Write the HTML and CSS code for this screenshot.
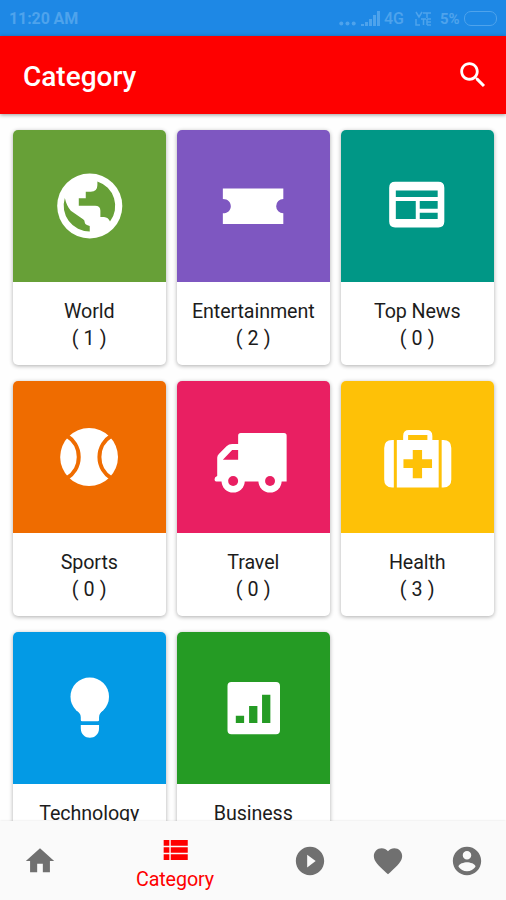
FILE: index.html
```html
<!DOCTYPE html>
<html lang="en">
<head>
    <meta charset="UTF-8">
    <meta name="viewport" content="width=device-width, initial-scale=1.0">
    <title>Category</title>
    <link rel="stylesheet" href="styles.css">
</head>
<body>
<div class="status-bar">
    <span class="time">11:20 AM</span>
    <div class="status-icons">
        <svg class="dots" viewBox="0 0 17 5"><circle cx="2.3" cy="2.5" r="2"/><circle cx="8.5" cy="2.5" r="2"/><circle cx="14.7" cy="2.5" r="2"/></svg>
        <svg class="signal" viewBox="0 0 19 15"><path d="M0 15v-2h3v2zM4 15v-4h3v4zM8 15V8h3v7zM12 15V4h3v11zM16 15V0h3v15z"/></svg>
        <span class="network">4G</span>
        <svg class="volte" viewBox="0 0 17 15"><path d="M1 1l3 5 3-5M8 2h8M12 2v5M1 8v6h4M6 8h5M8.500 8v6M12 8h4M12 11h4M12 14h4M12 8v6"/></svg>
        <span class="percent">5%</span>
        <span class="battery"></span>
    </div>
</div>
<header class="header">
    <h1>Category</h1>
    <svg class="search" viewBox="0 0 24 24"><path d="M15.500 14h-.79l-.28-.27C15.410 12.590 16 11.110 16 9.500 16 5.910 13.090 3 9.500 3S3 5.910 3 9.500 5.910 16 9.500 16c1.610 0 3.090-.59 4.230-1.570l.27.28v.79l5 4.990L20.490 19l-4.990-5zm-6 0C7.010 14 5 11.990 5 9.500S7.010 5 9.500 5 14 7.010 14 9.500 11.990 14 9.500 14z"/></svg>
</header>
<main class="categories">
    <div class="card">
        <div class="tile world">
            <svg viewBox="0 0 459 456">
                <circle cx="231" cy="228" r="98"/>
                <path class="ocean" d="M254 154A78 78 0 0 1 292 275Q287 262 274 261H263V242Q263 227 247 227H198V205H219V185H234Q254 185 254 165z"/>
                <path class="ocean" d="M156 204Q162 230 174 242L211 268Q216 271 216 278Q216 285 231 288V305A78 78 0 0 1 156 204z"/>
            </svg>
        </div>
        <p>World</p>
        <p class="count">( 1 )</p>
    </div>
    <div class="card">
        <div class="tile entertainment">
            <svg viewBox="0 0 459 456"><path d="M138 175h182v32a21.500 21.500 0 0 0 0 43v32H138v-32c32 0 32-43 0-43z"/></svg>
        </div>
        <p>Entertainment</p>
        <p class="count">( 2 )</p>
    </div>
    <div class="card">
        <div class="tile top-news">
            <svg viewBox="0 0 459 456"><path fill-rule="evenodd" d="M163 155h130q18 0 18 18v102q0 18-18 18H163q-18 0-18-18V173q0-18 18-18zM165 181v20h126v-20zM165 213v54h60v-54zM237 213v23h54v-23zM237 248v19h54v-19z"/></svg>
        </div>
        <p>Top News</p>
        <p class="count">( 0 )</p>
    </div>
    <div class="card">
        <div class="tile sports">
            <svg viewBox="0 0 459 456"><circle cx="229" cy="228" r="87"/><path class="seam" d="M162 164A75 75 0 0 1 162 292M296 164A75 75 0 0 0 296 292"/></svg>
        </div>
        <p>Sports</p>
        <p class="count">( 0 )</p>
    </div>
    <div class="card">
        <div class="tile travel">
            <svg viewBox="0 0 459 456">
                <path fill-rule="evenodd" d="M192 156h130q8 0 8 8v138H118q-5 0-5-7t8-10v-55q0-6 5-11l23-23q7-7 17-7h18v-25q0-8 8-8zM138 236h46v-29h-18z"/>
                <circle cx="169" cy="300" r="35"/><circle cx="280" cy="300" r="35"/>
                <circle class="hub" cx="169" cy="300" r="15"/><circle class="hub" cx="280" cy="300" r="15"/>
            </svg>
        </div>
        <p>Travel</p>
        <p class="count">( 0 )</p>
    </div>
    <div class="card">
        <div class="tile health">
            <svg viewBox="0 0 459 456">
                <path d="M159 177v143h-5q-24 0-24-24v-95q0-24 24-24zM303 177h5q24 0 24 24v95q0 24-24 24h-5z"/>
                <path fill-rule="evenodd" d="M168 177h19v-12q0-18 18-18h52q18 0 18 18v12h19v143H168zM202 162v15h58v-15zM216 207v28h-28v26h28v31h28v-31h30v-26h-30v-28z"/>
            </svg>
        </div>
        <p>Health</p>
        <p class="count">( 3 )</p>
    </div>
    <div class="card">
        <div class="tile technology">
            <svg viewBox="0 0 459 456"><circle cx="231" cy="194" r="58"/><path d="M184 226q20 16 20 30v8q0 4 4 4h47q4 0 4-4v-8q0-14 20-30zM204 279h55v10c0 38-55 38-55 0z"/></svg>
        </div>
        <p>Technology</p>
        <p class="count">( 0 )</p>
    </div>
    <div class="card">
        <div class="tile business">
            <svg viewBox="0 0 459 456"><path fill-rule="evenodd" d="M164 150h134q12 0 12 12v133q0 12-12 12H164q-12 0-12-12V162q0-12 12-12zM177 251v22h25v-22zM217 222v51h25v-51zM256 188v85h25v-85z"/></svg>
        </div>
        <p>Business</p>
        <p class="count">( 0 )</p>
    </div>
</main>
<nav class="bottom-nav">
    <a class="nav-item"><svg viewBox="0 0 24 24"><path d="M10 20v-6h4v6h5v-8h3L12 3 2 12h3v8z"/></svg></a>
    <a class="nav-item active">
        <svg viewBox="0 0 24 24"><path d="M4 14h4v-4H4v4zm0 5h4v-4H4v4zM4 9h4V5H4v4zm5 5h12v-4H9v4zm0 5h12v-4H9v4zM9 5v4h12V5H9z"/></svg>
        <span>Category</span>
    </a>
    <a class="nav-item"><svg viewBox="0 0 24 24"><path d="M12 2C6.480 2 2 6.480 2 12s4.480 10 10 10 10-4.480 10-10S17.520 2 12 2zm-2 14.500v-9l6 4.500-6 4.500z"/></svg></a>
    <a class="nav-item"><svg viewBox="0 0 24 24"><path d="M12 21.350l-1.450-1.320C5.400 15.360 2 12.280 2 8.500 2 5.420 4.420 3 7.500 3c1.740 0 3.410.810 4.500 2.090C13.090 3.810 14.760 3 16.500 3 19.580 3 22 5.420 22 8.500c0 3.780-3.400 6.860-8.550 11.540L12 21.350z"/></svg></a>
    <a class="nav-item"><svg viewBox="0 0 24 24"><path d="M12 2C6.480 2 2 6.480 2 12s4.480 10 10 10 10-4.480 10-10S17.520 2 12 2zm0 3c1.660 0 3 1.340 3 3s-1.340 3-3 3-3-1.340-3-3 1.340-3 3-3zm0 14.200c-2.500 0-4.710-1.280-6-3.220.030-1.990 4-3.080 6-3.080 1.990 0 5.970 1.090 6 3.080-1.290 1.940-3.500 3.220-6 3.220z"/></svg></a>
</nav>
</body>
</html>
```
FILE: styles.css
```css
* {
    box-sizing: border-box;
}

body {
    font-family: Roboto, sans-serif;
    background-color: #fefefe;
    margin: 0;
    height: 100vh;
    display: flex;
    flex-direction: column;
    overflow: hidden;
    color: #1c1c1c;
}

svg {
    display: block;
    fill: currentColor;
}

/* Status bar */
.status-bar {
    flex: none;
    display: flex;
    justify-content: space-between;
    align-items: center;
    height: 36px;
    padding: 1px 9px 0 9px;
    background-color: #1e88e5;
    color: #4ea3ec;
    font-size: 16px;
    font-weight: 700;
}

.time {
    letter-spacing: -0.1px;
}

.status-icons {
    display: flex;
    align-items: center;
}

.dots {
    width: 17px;
    height: 5px;
    margin: 9px 5px 0 0;
}

.signal {
    width: 19px;
    height: 15px;
    margin-right: 4px;
}

.network {
    width: 31px;
    font-weight: 500;
}

.volte {
    width: 17px;
    height: 15px;
    margin-right: 8px;
    fill: none;
    stroke: currentColor;
    stroke-width: 1.5;
}

.percent {
    width: 24px;
    font-size: 15px;
}

.battery {
    width: 33px;
    height: 15px;
    border: 1.5px solid #4ea3ec;
    border-radius: 7px;
}

/* Header */
.header {
    flex: none;
    display: flex;
    justify-content: space-between;
    align-items: center;
    height: 78px;
    padding: 0 16px 0 23px;
    background-color: #fe0000;
    color: #fff;
    box-shadow: 0 1px 4px rgba(0, 0, 0, 0.4);
    z-index: 1;
}

.header h1 {
    margin: 3px 0 0;
    font-size: 28px;
    font-weight: 500;
}

.search {
    width: 34px;
    height: 34px;
}

/* Category cards */
.categories {
    flex: 1;
    min-height: 0;
    display: grid;
    grid-template-columns: repeat(3, 152.5px);
    grid-auto-rows: 234.5px;
    gap: 16.5px 11.5px;
    align-content: start;
    padding: 16px 13px 0;
    overflow: hidden;
}

.card {
    border-radius: 5px;
    background-color: #fff;
    box-shadow: 0 1px 4px rgba(0, 0, 0, 0.32);
    overflow: hidden;
    text-align: center;
    font-size: 19.7px;
    line-height: 27px;
}

.card p {
    margin: 0;
    letter-spacing: -0.1px;
}

.card .count {
    letter-spacing: 0.1px;
}

.tile {
    height: 152px;
    margin-bottom: 16px;
    color: #fff;
}

.tile svg {
    width: 100%;
    height: 100%;
}

.world { background-color: #67a037; }
.entertainment { background-color: #7e57c1; }
.top-news { background-color: #009786; }
.sports { background-color: #ef6c00; }
.travel { background-color: #e91f62; }
.health { background-color: #fec107; }
.technology { background-color: #039ae5; }
.business { background-color: #259b24; }

.ocean {
    fill: #67a037;
}

.seam {
    fill: none;
    stroke: #ef6c00;
    stroke-width: 12;
}

.hub {
    fill: #e91f62;
}

/* Bottom navigation */
.bottom-nav {
    flex: none;
    display: flex;
    height: 79px;
    padding-left: 1px;
    background-color: #fafafa;
    color: #707070;
    box-shadow: 0 0 2px rgba(0, 0, 0, 0.12);
    z-index: 1;
}

.nav-item {
    display: flex;
    flex-direction: column;
    align-items: center;
    width: 78.6px;
    padding-top: 23px;
}

.nav-item svg {
    width: 34px;
    height: 34px;
}

.nav-item.active {
    width: 191.2px;
    padding-top: 12px;
    color: #fe0000;
    font-size: 19.7px;
    line-height: 26px;
    letter-spacing: -0.1px;
}
```
